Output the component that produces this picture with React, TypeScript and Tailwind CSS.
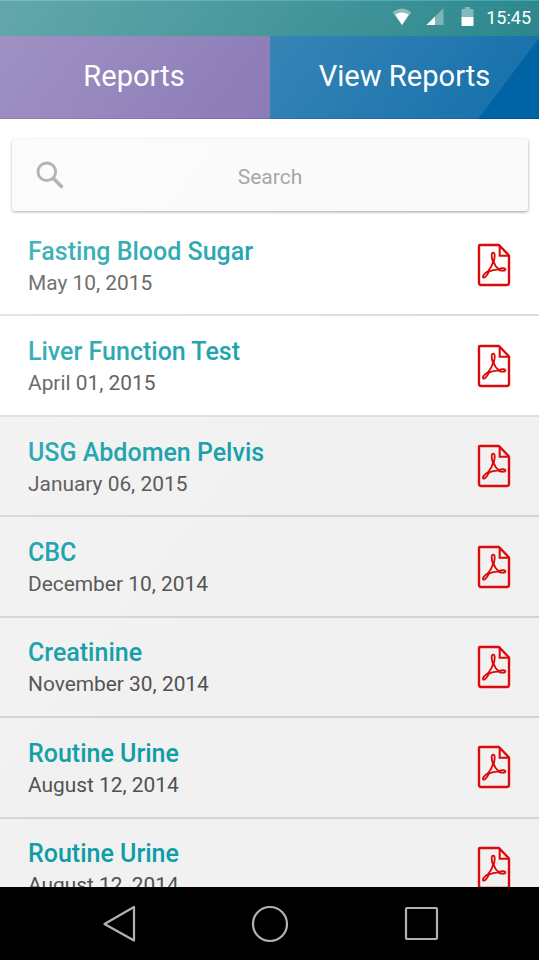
import { useState } from 'react';

const reports = [
  { title: 'Fasting Blood Sugar', date: 'May 10, 2015', read: true },
  { title: 'Liver Function Test', date: 'April 01, 2015', read: true },
  { title: 'USG Abdomen Pelvis', date: 'January 06, 2015', read: false },
  { title: 'CBC', date: 'December 10, 2014', read: false },
  { title: 'Creatinine', date: 'November 30, 2014', read: false },
  { title: 'Routine Urine', date: 'August 12, 2014', read: false },
  { title: 'Routine Urine', date: 'August 12, 2014', read: false },
];

function PdfIcon() {
  return (
    <svg width="34" height="44" viewBox="0 0 34 44" fill="none" stroke="#dc0a0a" strokeLinejoin="round">
      <path d="M3 2H22L32 12.5V40Q32 42 30 42H4Q2 42 2 40V3Q2 2 3 2Z" strokeWidth="2.4" />
      <path d="M22.7 2.5V12.8H32" strokeWidth="2.1" strokeLinejoin="miter" />
      <path
        d="M16 19C14.5 14.5 14 9.6 16.2 9.6C18.4 9.6 17.9 14.5 16.7 19C17.8 22.2 19.4 24.6 21.8 26C25.6 24.6 28.6 25.2 28.4 26.6C28.2 28.2 24.6 28 21.4 26.6C18.3 26.3 15 27.1 12.2 28.3C10.3 31.8 8 35.4 6.4 34.6C4.8 33.8 7.3 30.4 11.2 28C13.4 25.6 15.2 22.2 16 19Z"
        strokeWidth="1.8"
      />
    </svg>
  );
}

function StatusBar() {
  return (
    <div className="flex h-9 items-center justify-end border-t border-[#229fa8] bg-[#137a80] pr-2 text-white">
      <svg width="20" height="18" viewBox="0 0 20 18" fill="white" className="mt-[-3px] mr-3.5">
        <path d="M.5 4.2Q10-3.2 19.5 4.2L10 17Z" opacity=".4" />
        <path d="M3.3 6.6Q10 2.4 16.7 6.6L10 17Z" />
      </svg>
      <svg width="18" height="18" viewBox="0 0 18 18" fill="white" className="mt-[-3px] mr-[17px]">
        <path d="M17.5 0V17H.5Z" opacity=".35" />
        <path d="M9 8.5V17H.5Z" />
      </svg>
      <svg width="13" height="19" viewBox="0 0 13 19" fill="white" className="mt-[-4px] mr-3">
        <path d="M1.5 2H4V0H9V2H11.5Q12.5 2 12.5 3V10H.5V3Q.5 2 1.5 2Z" opacity=".4" />
        <path d="M.5 10H12.5V18Q12.5 19 11.5 19H1.5Q.5 19 .5 18Z" />
      </svg>
      <span className="mt-[-2px] text-[18px] leading-none">15:45</span>
    </div>
  );
}

function NavBar() {
  return (
    <nav className="relative z-10 flex h-[73px] shrink-0 items-center justify-center gap-[111px] bg-black">
      <svg width="40" height="40" viewBox="0 0 40 40" fill="none" stroke="#b2b2b2" strokeWidth="2.2" strokeLinejoin="round">
        <path d="M34 3V36.5L4.5 20Z" />
      </svg>
      <svg width="38" height="38" viewBox="0 0 38 38" fill="none" stroke="#b2b2b2" strokeWidth="2.2">
        <circle cx="19" cy="19" r="17" />
      </svg>
      <svg width="40" height="40" viewBox="0 0 40 40" fill="none" stroke="#b2b2b2" strokeWidth="2.2">
        <rect x="6" y="4" width="31" height="31" rx="1" />
      </svg>
    </nav>
  );
}

export default function App() {
  const [query, setQuery] = useState('');

  const visible = reports.filter((r) => r.title.toLowerCase().includes(query.toLowerCase()));

  return (
    <div className="relative flex h-[960px] w-[539px] flex-col overflow-hidden bg-white font-['Roboto',sans-serif]">
      <StatusBar />

      <div className="flex h-[83px] shrink-0 text-[29.1px] text-white">
        <button className="w-[270px] border-b border-[#60499b] bg-[#705ca6] pr-0.5">Reports</button>
        <button className="flex-1 border-b border-[#004f91] bg-[#0063a3]">View Reports</button>
      </div>

      <main className="flex min-h-0 flex-1 flex-col overflow-hidden">
        <label className="mr-[11px] ml-3 mt-5 flex h-[72px] shrink-0 items-center rounded-[3px] bg-[#fafafa] shadow-[0_1px_3px_rgba(0,0,0,0.4)]">
          <svg width="28" height="28" viewBox="0 0 28 28" fill="none" stroke="#9b9b9b" className="ml-6 shrink-0">
            <circle cx="10.8" cy="10.8" r="8.8" strokeWidth="2.9" />
            <path d="M17 17L26.4 26.4" strokeWidth="3.6" />
          </svg>
          <input
            className="mr-[52px] min-w-0 flex-1 bg-transparent pt-[5px] text-center text-[21px] outline-none placeholder:text-[#9b9b9b]"
            placeholder="Search"
            value={query}
            onChange={(e) => setQuery(e.target.value)}
          />
        </label>

        <ul className="mt-[5px]">
          {visible.map((report, i) => (
            <li
              key={i}
              className={`flex h-[100.45px] items-center justify-between border-b-2 pr-7 pl-7 ${
                report.read ? 'border-[#dedede] bg-white' : 'border-[#d4d4d4] bg-[#f1f1f1]'
              }`}
            >
              <div className="pt-[3px]">
                <h2 className="text-[25px] leading-8 font-medium text-[#0e9da8]">{report.title}</h2>
                <p className="text-[20.9px] leading-[30px] text-[#505050]">{report.date}</p>
              </div>
              <PdfIcon />
            </li>
          ))}
        </ul>
      </main>

      <NavBar />

      {/* glass glare: hard edge across the header, fading out over the list */}
      <div className="pointer-events-none absolute inset-x-0 top-0 h-[119px] bg-[linear-gradient(127deg,rgba(255,255,255,0.34)_0px,rgba(255,255,255,0.1)_453px,rgba(255,255,255,0)_454px)]" />
      <div className="pointer-events-none absolute inset-x-0 top-[119px] h-[768px] bg-[linear-gradient(127deg,rgba(255,255,255,0.3)_0px,rgba(255,255,255,0.08)_300px,rgba(255,255,255,0)_480px)]" />
    </div>
  );
}
